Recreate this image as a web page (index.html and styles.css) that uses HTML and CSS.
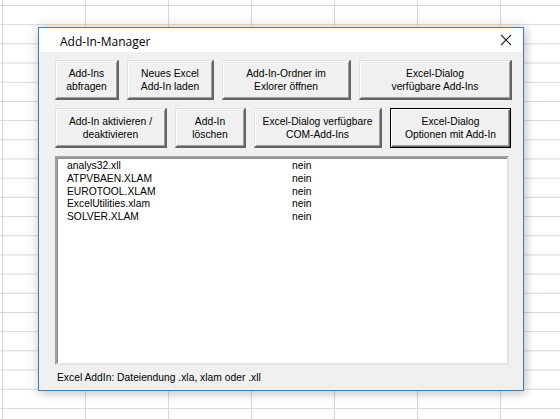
FILE: index.html
```html
<!DOCTYPE html>
<html>
<head>
<meta charset="utf-8">
<link rel="stylesheet" href="styles.css">
</head>
<body>
<div class="sheet">
  <div class="dialog">
    <div class="titlebar">
      <span class="title">Add-In-Manager</span>
      <span class="close"><svg width="12" height="12" viewBox="0 0 12 12"><path d="M1 1 L11 11 M11 1 L1 11" stroke="#222" stroke-width="1.1" fill="none"/></svg></span>
    </div>
    <div class="body">
      <div class="row">
        <button class="btn w1">Add-Ins<br>abfragen</button>
        <button class="btn w2">Neues Excel<br>Add-In laden</button>
        <button class="btn w3">Add-In-Ordner im<br>Exlorer öffnen</button>
        <button class="btn w4">Excel-Dialog<br>verfügbare Add-Ins</button>
      </div>
      <div class="row">
        <button class="btn w5">Add-In aktivieren /<br>deaktivieren</button>
        <button class="btn w6">Add-In<br>löschen</button>
        <button class="btn w7">Excel-Dialog verfügbare<br>COM-Add-Ins</button>
        <button class="btn w8 default">Excel-Dialog<br>Optionen mit Add-In</button>
      </div>
      <div class="list">
        <div class="item"><span class="name">analys32.xll</span><span class="val">nein</span></div>
        <div class="item"><span class="name">ATPVBAEN.XLAM</span><span class="val">nein</span></div>
        <div class="item"><span class="name">EUROTOOL.XLAM</span><span class="val">nein</span></div>
        <div class="item"><span class="name">ExcelUtilities.xlam</span><span class="val">nein</span></div>
        <div class="item"><span class="name">SOLVER.XLAM</span><span class="val">nein</span></div>
      </div>
      <div class="status">Excel AddIn: Dateiendung .xla, xlam oder .xll</div>
    </div>
  </div>
</div>
</body>
</html>
```

FILE: styles.css
```css
html, body {
  margin: 0;
  padding: 0;
}
.sheet {
  position: relative;
  width: 560px;
  height: 419px;
  overflow: hidden;
  background-color: #fff;
  background-image:
    linear-gradient(to right, #d8d8d8 1px, transparent 1px),
    linear-gradient(to bottom, #d8d8d8 1px, transparent 1px);
  background-size: 83px 100%, 100% 19.2px;
  background-position: 2px 0, 0 5px;
}
.dialog {
  position: absolute;
  left: 38px;
  top: 27px;
  width: 484px;
  height: 362px;
  border: 1px solid #3d7fb5;
  background: #f0f0f0;
  box-shadow: 0 0 12px rgba(0,0,0,0.18), 3px 4px 8px rgba(0,0,0,0.10);
  display: flex;
  flex-direction: column;
  font-family: "Liberation Sans", Arial, sans-serif;
  font-size: 10.3px;
  color: #000;
}
.titlebar {
  height: 24px;
  background: #fff;
  display: flex;
  align-items: center;
  justify-content: space-between;
  padding: 0 11px 0 21px;
  flex: none;
}
.title {
  font-family: "Open Sans", "Noto Sans", sans-serif;
  font-size: 12px;
  color: #000;
  position: relative;
  top: 1px;
}
.close {
  display: flex;
  width: 12px;
  height: 12px;
}
.body {
  flex: 1;
  display: flex;
  flex-direction: column;
  padding: 8px 0 0 16px;
}
.row {
  display: flex;
  gap: 8px;
  margin-bottom: 8px;
}
.btn {
  height: 40px;
  box-sizing: border-box;
  margin: 0;
  padding: 0;
  font-family: "Liberation Sans", Arial, sans-serif;
  font-size: 10.3px;
  line-height: 13px;
  color: #000;
  background: #f0f0f0;
  border-style: solid;
  border-width: 1px 2px 2px 1px;
  border-color: #e3e3e3 #646464 #646464 #e3e3e3;
  box-shadow: inset 1px 1px 0 #fff, inset -1px -1px 0 #a0a0a0;
  text-align: center;
}
.btn.default {
  border: 1px solid #000;
  box-shadow: inset 1px 1px 0 #fff, inset -1px -1px 0 #646464, inset -2px -2px 0 #a0a0a0;
}
.w1 { width: 64px; }
.w2 { width: 87px; }
.w3 { width: 129px; }
.w4 { width: 153px; }
.w5 { width: 112px; }
.w6 { width: 71px; }
.w7 { width: 128px; }
.w8 { width: 121px; }
.list {
  width: 454px;
  height: 209px;
  box-sizing: border-box;
  background: #fff;
  border-style: solid;
  border-width: 2px;
  border-color: #a0a0a0 #e3e3e3 #e3e3e3 #a0a0a0;
  box-shadow: inset 1px 1px 0 #8a8a8a;
  padding: 2px 0 0 10px;
}
.item {
  display: flex;
  height: 12.8px;
  line-height: 12.8px;
  white-space: nowrap;
}
.name {
  width: 225px;
}
.status {
  margin-top: 7px;
  margin-left: 2px;
}
```
